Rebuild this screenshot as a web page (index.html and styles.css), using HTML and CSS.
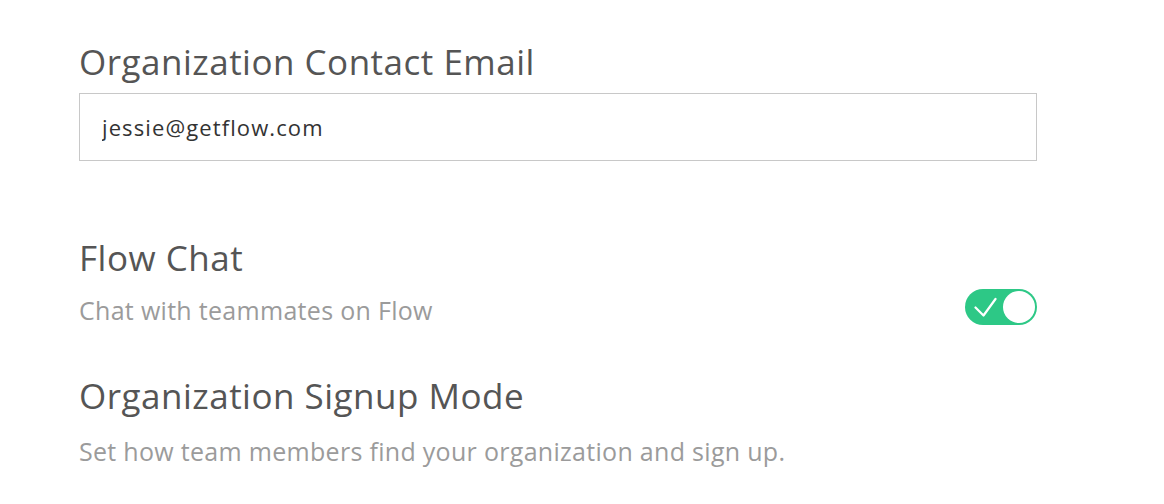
FILE: index.html
```html
<!DOCTYPE html>
<html lang="en">
<head>
    <meta charset="UTF-8">
    <title>Organization Settings</title>
    <link rel="stylesheet" href="styles.css">
</head>
<body>
    <div class="settings">
        <section class="field">
            <h2 class="field-title">Organization Contact Email</h2>
            <input class="text-input" type="text" value="jessie@getflow.com">
        </section>

        <section class="field field-chat">
            <h2 class="field-title">Flow Chat</h2>
            <div class="field-row">
                <p class="field-desc">Chat with teammates on Flow</p>
                <div class="toggle on">
                    <svg class="toggle-check" width="23" height="21" viewBox="0 0 23 21">
                        <path d="M1.5 10.5 L9.5 18.5 L21.5 2" fill="none" stroke="#fff" stroke-width="2.2" stroke-linecap="round" stroke-linejoin="round"/>
                    </svg>
                    <div class="toggle-knob"></div>
                </div>
            </div>
        </section>

        <section class="field field-signup">
            <h2 class="field-title">Organization Signup Mode</h2>
            <p class="field-desc">Set how team members find your organization and sign up.</p>
        </section>
    </div>
</body>
</html>
```

FILE: styles.css
```css
:root {
    --title-color: #555;
    --desc-color: #9b9b9b;
    --input-text: #333;
    --border-color: #c8c8c8;
    --green: #2dc886;
}

* {
    box-sizing: border-box;
    margin: 0;
    padding: 0;
}

body {
    font-family: 'Open Sans', sans-serif;
    background: #fff;
}

.settings {
    width: 958px;
    margin-left: 79px;
    padding-top: 40px;
}

.field-title {
    font-size: 35px;
    font-weight: 400;
    letter-spacing: 0.5px;
    color: var(--title-color);
    line-height: 44px;
}

.text-input {
    display: block;
    width: 100%;
    height: 68px;
    margin-top: 9px;
    border: 1px solid var(--border-color);
    padding: 0 22px;
    font-family: inherit;
    font-size: 22px;
    letter-spacing: 1.1px;
    color: var(--input-text);
    outline: none;
}

.field-chat {
    margin-top: 75px;
}

.field-row {
    display: flex;
    align-items: flex-start;
    justify-content: space-between;
    margin-top: 9px;
}

.field-desc {
    font-size: 25px;
    letter-spacing: 0.3px;
    color: var(--desc-color);
    line-height: 36px;
}

.field-row .field-desc {
    margin-top: 3px;
}

/* switch */
.toggle {
    width: 72px;
    height: 36px;
    border-radius: 18px;
    background: var(--green);
    display: flex;
    align-items: center;
    justify-content: space-between;
    padding: 0 2px 0 9px;
}

.toggle-knob {
    width: 32px;
    height: 32px;
    border-radius: 50%;
    background: #fff;
}

.field-signup {
    margin-top: 46px;
}

.field-signup .field-desc {
    margin-top: 15px;
}
```
